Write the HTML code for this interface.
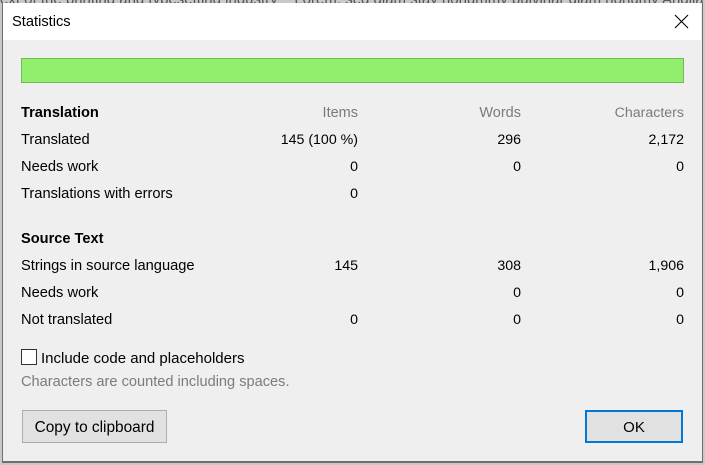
<!DOCTYPE html>
<html><head><meta charset="utf-8"><style>
html,body{margin:0;padding:0;width:705px;height:465px;overflow:hidden;background:#c9c9c9}
body{position:relative;font-family:"Liberation Sans",sans-serif;font-size:14.67px;color:#000}
.bg{position:absolute;white-space:nowrap;font-size:15px;color:#555;left:0;top:-9px;width:705px;overflow:hidden;height:12px}
#d{position:absolute;left:2px;top:3px;width:699px;height:458px;background:#efefef;border:1px solid #6f6f6f;border-top:0;border-bottom:2px solid #6f6f6f}
#tb{position:absolute;left:3px;top:3px;width:698px;height:37px;background:#fff}
.t{position:absolute;white-space:nowrap;line-height:18px;height:18px;margin-top:1px}
.r{text-align:right;width:140px;font-size:14.2px}
.g{color:#7b7b7b}
.h{font-size:14.5px}
.b{font-weight:bold;font-size:14.6px}
.btn{position:absolute;box-sizing:border-box;background:#e1e1e1;text-align:center;line-height:33px}
</style></head><body>
<div class="bg">ext of the printing and typesetting industry &nbsp;&nbsp; Lorem, sed diam stay nonummy pulvinar diam nonumy Anglia, as probably</div>
<div id="d"></div><div id="tb"></div>
<div class="t" style="left:12px;top:12px">Statistics</div>
<svg style="position:absolute;left:674px;top:14px" width="15" height="15" viewBox="0 0 15 15"><path d="M1 1L14 14M14 1L1 14" stroke="#000" stroke-width="1.1" fill="none"/></svg>
<div style="position:absolute;left:21px;top:58px;width:663px;height:25px;box-sizing:border-box;background:#92ee6d;border:1px solid #70bb55"></div>

<div class="t b" style="left:21px;top:103px">Translation</div>
<div class="t r g h" style="left:218px;top:103px">Items</div>
<div class="t r g h" style="left:381px;top:103px">Words</div>
<div class="t r g h" style="left:544px;top:103px;font-size:14.2px">Characters</div>

<div class="t" style="left:21px;top:130px">Translated</div>
<div class="t r" style="left:218px;top:130px">145 (100 %)</div>
<div class="t r" style="left:381px;top:130px">296</div>
<div class="t r" style="left:544px;top:130px">2,172</div>

<div class="t" style="left:21px;top:157px">Needs work</div>
<div class="t r" style="left:218px;top:157px">0</div>
<div class="t r" style="left:381px;top:157px">0</div>
<div class="t r" style="left:544px;top:157px">0</div>

<div class="t" style="left:21px;top:184px">Translations with errors</div>
<div class="t r" style="left:218px;top:184px">0</div>

<div class="t b" style="left:21px;top:229px">Source Text</div>

<div class="t" style="left:21px;top:256px">Strings in source language</div>
<div class="t r" style="left:218px;top:256px">145</div>
<div class="t r" style="left:381px;top:256px">308</div>
<div class="t r" style="left:544px;top:256px">1,906</div>

<div class="t" style="left:21px;top:283px">Needs work</div>
<div class="t r" style="left:381px;top:283px">0</div>
<div class="t r" style="left:544px;top:283px">0</div>

<div class="t" style="left:21px;top:310px">Not translated</div>
<div class="t r" style="left:218px;top:310px">0</div>
<div class="t r" style="left:381px;top:310px">0</div>
<div class="t r" style="left:544px;top:310px">0</div>

<div style="position:absolute;left:21px;top:349px;width:16px;height:16px;box-sizing:border-box;background:#fff;border:1px solid #333"></div>
<div class="t" style="left:41px;top:349px;font-size:15px">Include code and placeholders</div>
<div class="t g" style="left:21px;top:372px;font-size:14.6px">Characters are counted including spaces.</div>

<div class="btn" style="left:22px;top:410px;width:145px;height:33px;border:1px solid #adadad;font-size:15.4px">Copy to clipboard</div>
<div class="btn" style="left:585px;top:410px;width:98px;height:33px;border:2px solid #0078d7;line-height:31px;font-size:15px">OK</div>
</body></html>
